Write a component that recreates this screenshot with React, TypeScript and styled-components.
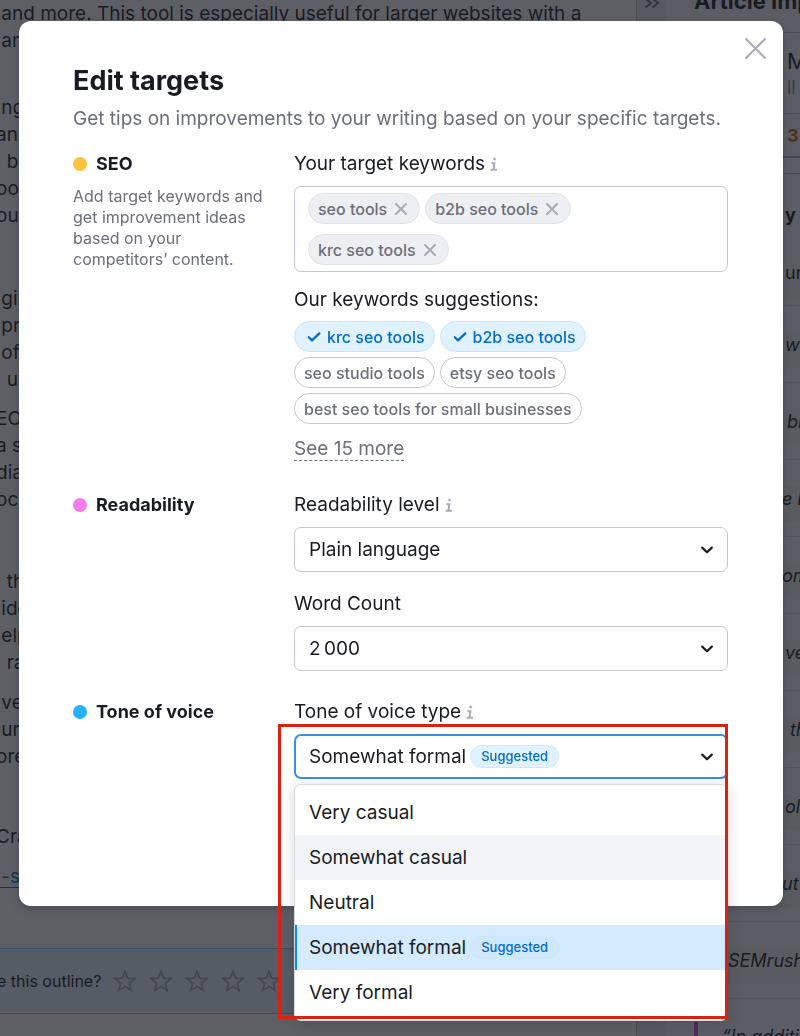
import React, { useState } from "react";
import styled, { createGlobalStyle } from "styled-components";

const GlobalStyle = createGlobalStyle`
  *, *::before, *::after { box-sizing: border-box; }
  html, body { margin: 0; padding: 0; }
  body {
    font-family: Inter, "Liberation Sans", sans-serif;
    color: #191b23;
    overflow: hidden;
  }
  button, select { font-family: inherit; color: inherit; }
`;

/* ---------- page behind the dialog ---------- */

const Page = styled.div`
  display: flex;
  height: 100vh;
  overflow: hidden;
  background: #fff;
`;

const Article = styled.main`
  flex: 1;
  min-width: 0;
  margin-left: -4px;
  overflow: hidden;
`;

const Paragraph = styled.p<{ $gap: number }>`
  margin: 0 0 ${(p) => p.$gap}px;
  font-size: 19px;
  line-height: 27px;
  white-space: pre;
`;

const ArticleLink = styled.a`
  color: #006dca;
  text-decoration: underline;
  text-underline-offset: 4px;
`;

const RatingBar = styled.div`
  display: flex;
  align-items: center;
  gap: 12px;
  height: 66px;
  margin-top: 58px;
  padding-left: 1px;
  border: solid #8ecdf8;
  border-width: 1px 0;
  background: #e3f5ff;
  font-size: 16px;
  white-space: nowrap;
`;

const StarButton = styled.button`
  display: flex;
  padding: 0;
  border: 0;
  background: none;
  color: #a9abb6;
`;

const CollapseStrip = styled.div`
  width: 30px;
  border-left: 1px solid #c4c7cf;
  background: #e8eaee;
  display: flex;
  justify-content: center;
  align-items: flex-start;
  color: #6c6e79;
`;

const Sidebar = styled.aside`
  width: 134px;
  overflow: hidden;
  white-space: nowrap;
  background: #f7f8fa;
`;

const SidebarTitle = styled.h2`
  margin: 0;
  height: 33px;
  padding-left: 28px;
  border-bottom: 1px solid #c4c7cf;
  font-size: 22px;
  line-height: 2px;
`;

const Score = styled.section`
  padding: 14px 0 12px 121px;
  border-bottom: 1px solid #c4c7cf;
  font-size: 22px;
  line-height: 28px;
`;

const ScoreNote = styled.small`
  display: block;
  font-size: 18px;
  line-height: 26px;
  color: #8a8e9b;
`;

const ScoreCount = styled.section`
  height: 44px;
  padding-left: 121px;
  border-bottom: 2px solid #a9abb6;
  font-size: 18px;
  line-height: 44px;
  font-weight: 700;
  color: #c56200;
`;

const IssueHeading = styled.h3`
  margin: 15px 0 0;
  height: 66px;
  padding: 14px 0 0 119px;
  border-top: 1px solid #c4c7cf;
  font-size: 18px;
  line-height: 54px;
`;

const IssueRow = styled.div<{ $inset: number; $accent?: boolean; $plain?: boolean }>`
  display: flex;
  align-items: center;
  height: ${(p) => (p.$plain ? 67 : 77)}px;
  padding-left: ${(p) => p.$inset}px;
  border-bottom: 1px solid #d6dae2;
  background: linear-gradient(#f7f8fa 26px, #eef0f2 26px, #eef0f2 62px, #f7f8fa 62px);
  font-size: 18px;
  font-style: ${(p) => (p.$plain ? "normal" : "italic")};
  white-space: pre;
  ${(p) => p.$accent && "margin-left: 28px; margin-top: 23px; height: 30px; border-left: 4px solid #d84fe0;"}
`;

/* ---------- dialog ---------- */

const Overlay = styled.div`
  position: fixed;
  inset: 0;
  padding: 21px 17px 0 19px;
  background: rgba(25, 27, 35, 0.7);
`;

const Dialog = styled.section`
  position: relative;
  min-height: 885px;
  padding: 42px 55px 0 54px;
  border-radius: 12px;
  background: #fff;
  box-shadow: 0 3px 8px rgba(25, 27, 35, 0.25);
`;

const CloseButton = styled.button`
  position: absolute;
  top: 17px;
  right: 17px;
  display: flex;
  padding: 0;
  border: 0;
  background: none;
  color: #a9abb6;
`;

const Title = styled.h1`
  margin: 0 0 8px;
  font-size: 27px;
  line-height: 36px;
`;

const Subtitle = styled.p`
  margin: 0 0 21px;
  font-size: 19px;
  line-height: 24px;
  color: #6c6e79;
`;

const Group = styled.section`
  display: grid;
  grid-template-columns: 197px minmax(0, 1fr);
  column-gap: 24px;
  align-items: start;
`;

const GroupTitle = styled.h2`
  display: flex;
  align-items: center;
  gap: 9px;
  margin: 0 0 10px;
  font-size: 18px;
  line-height: 24px;
  font-weight: 700;
`;

const Dot = styled.span<{ $color: string }>`
  width: 14px;
  height: 14px;
  border-radius: 50%;
  background: ${(p) => p.$color};
`;

const GroupText = styled.p`
  margin: 0;
  font-size: 16px;
  line-height: 21px;
  color: #6c6e79;
`;

const Field = styled.div<{ $gap?: number }>`
  position: relative;
  margin-bottom: ${(p) => p.$gap ?? 0}px;
`;

const labelText = `
  display: flex;
  align-items: center;
  gap: 5px;
  font-size: 19px;
  line-height: 24px;
`;

const Label = styled.label`
  ${labelText}
  margin-bottom: 10px;
`;

const Caption = styled.h3`
  ${labelText}
  margin: 0 0 9px;
  font-weight: 400;
`;

const TagBox = styled.div`
  display: flex;
  flex-wrap: wrap;
  gap: 10px 5px;
  margin-bottom: 16px;
  padding: 6px 120px 6px 13px;
  border: 1px solid #c4c7cf;
  border-radius: 7px;
`;

const Tag = styled.span`
  display: flex;
  align-items: center;
  gap: 8px;
  height: 31px;
  padding: 0 12px 0 9px;
  border: 1px solid #e0e1e9;
  border-radius: 16px;
  background: #eeeff3;
  font-size: 16px;
  font-weight: 500;
  color: #6c6e79;
`;

const TagRemove = styled.button`
  display: flex;
  padding: 0;
  border: 0;
  background: none;
  color: #a9abb6;
`;

const Suggestions = styled.div`
  display: flex;
  flex-wrap: wrap;
  gap: 5px;
  padding-right: 100px;
  margin-bottom: 14px;
`;

const Suggestion = styled.button<{ $on?: boolean }>`
  display: flex;
  align-items: center;
  gap: 6px;
  height: 31px;
  padding: 0 ${(p) => (p.$on ? "9px 0 12px" : "9px")};
  border: 1px solid ${(p) => (p.$on ? "#c4e5fe" : "#c4c7cf")};
  border-radius: 16px;
  background: ${(p) => (p.$on ? "#e0f1ff" : "#fff")};
  font-size: 16px;
  font-weight: 500;
  color: ${(p) => (p.$on ? "#006dca" : "#6c6e79")};
`;

const MoreButton = styled.button`
  padding: 0;
  border: 0;
  border-bottom: 1px dashed #6c6e79;
  background: none;
  font-size: 19px;
  line-height: 22px;
  color: #6c6e79;
`;

const SelectWrap = styled.div`
  display: grid;
  align-items: center;
  > * { grid-area: 1 / 1; }
  > svg { justify-self: end; margin-right: 14px; pointer-events: none; }
`;

const Select = styled.select`
  appearance: none;
  width: 100%;
  height: 45px;
  padding: 0 40px 0 14px;
  border: 1px solid #c4c7cf;
  border-radius: 7px;
  background: #fff;
  font-size: 19px;
`;

const ToneTrigger = styled.button`
  display: flex;
  align-items: center;
  gap: 4px;
  width: 100%;
  height: 45px;
  padding: 0 12px 0 13px;
  border: 2px solid #3b8ee0;
  border-radius: 7px;
  background: #fff;
  font-size: 19px;
  > svg { margin-left: auto; }
`;

const Badge = styled.span`
  height: 23px;
  padding: 0 10px;
  border: 1px solid #cce8ff;
  border-radius: 12px;
  background: #e0f1ff;
  font-size: 13px;
  line-height: 20px;
  font-weight: 500;
  color: #006dca;
`;

const Menu = styled.ul`
  position: absolute;
  z-index: 1;
  top: 84px;
  left: 0;
  right: 0;
  margin: 0;
  padding: 5px 0;
  border: 1px solid #d9dae2;
  border-radius: 7px;
  background: #fff;
  box-shadow: 0 2px 14px rgba(25, 27, 35, 0.18);
  list-style: none;
`;

const Option = styled.li<{ $state?: "hover" | "selected" }>`
  display: flex;
  align-items: center;
  gap: 4px;
  height: 45px;
  padding-left: ${(p) => (p.$state === "selected" ? 12 : 14)}px;
  border-left: ${(p) => (p.$state === "selected" ? "2px solid #008ff8" : "0")};
  background: ${(p) => (p.$state === "selected" ? "#d4eafe" : p.$state === "hover" ? "#f3f4f8" : "#fff")};
  font-size: 19px;
  ${Badge} {
    ${(p) => p.$state === "selected" && "background: #cfe8fe; border-color: #cbe6fd;"}
  }
`;

const Highlight = styled.div`
  position: absolute;
  z-index: 2;
  top: 24px;
  left: -16px;
  right: 0;
  height: 295px;
  border: 3px solid #db2114;
  pointer-events: none;
`;

/* ---------- icons ---------- */

const InfoIcon = () => (
  <svg width="8" height="14" viewBox="0 0 8 14" fill="none" stroke="#a9abb6" strokeWidth="2" aria-hidden="true">
    <circle cx="4.6" cy="2" r="1.4" fill="#a9abb6" stroke="none" />
    <path d="M1.400 6.200H4.300L3.500 12.600M.6 12.800h6.400" />
  </svg>
);

const CrossIcon = ({ size, weight }: { size: number; weight: number }) => (
  <svg width={size} height={size} viewBox={`0 0 ${size} ${size}`} fill="none" stroke="currentColor" strokeWidth={weight} strokeLinecap="round" aria-hidden="true">
    <path d={`M1 1L${size - 1} ${size - 1}M${size - 1} 1L1 ${size - 1}`} />
  </svg>
);

const CheckIcon = () => (
  <svg width="14" height="12" viewBox="0 0 14 12" fill="none" stroke="currentColor" strokeWidth="2.2" strokeLinecap="round" strokeLinejoin="round" aria-hidden="true">
    <path d="M1.800 6.200L5 9.400 12.400 2.400" />
  </svg>
);

const ChevronIcon = () => (
  <svg width="14" height="10" viewBox="0 0 14 10" fill="none" stroke="#191b23" strokeWidth="2.2" strokeLinecap="round" strokeLinejoin="round" aria-hidden="true">
    <path d="M2.200 2.600L7 7.200l4.800-4.600" />
  </svg>
);

const StarIcon = () => (
  <svg width="24" height="24" viewBox="0 0 24 24" fill="none" stroke="currentColor" strokeWidth="1.8" aria-hidden="true">
    <path d="M12 2.400l2.700 6.700 7.200.5-5.500 4.700 1.700 7.100L12 17.500l-6.100 3.900 1.700-7.100L2.100 9.600l7.200-.5z" />
  </svg>
);

const DoubleChevronIcon = () => (
  <svg width="16" height="12" viewBox="0 0 16 12" fill="none" stroke="currentColor" strokeWidth="2" strokeLinecap="round" aria-hidden="true">
    <path d="M2-1l5 4-5 4M9-1l5 4-5 4" />
  </svg>
);

/* ---------- data ---------- */

const paragraphs = [
  { gap: 40, lines: [" and more. This tool is especially useful for larger websites with a", " and audits"] },
  { gap: 56, lines: [" ng", "and", "  be", "ool", "our"] },
  { gap: 12, lines: [" gin", " pro", " off", "  use"] },
  { gap: 55, lines: ["EO", "a s", "dia", "oca"] },
  { gap: 13, lines: ["  th", " ide", " elp", "  ra"] },
  { gap: 53, lines: [" ve", " ur", "ore"] },
  { gap: 13, lines: ["Cra"] },
];

const issues = [
  { text: "ur", inset: 119, plain: true },
  { text: "we", inset: 119 },
  { text: "bi", inset: 121 },
  { text: "e k", inset: 116 },
  { text: "om", inset: 116 },
  { text: "ve", inset: 119 },
  { text: " th", inset: 119 },
  { text: "ol", inset: 119 },
  { text: "ut", inset: 116 },
  { text: "SEMrush", inset: 62 },
];

const tones: { name: string; state?: "hover" | "selected" }[] = [
  { name: "Very casual" },
  { name: "Somewhat casual", state: "hover" },
  { name: "Neutral" },
  { name: "Somewhat formal", state: "selected" },
  { name: "Very formal" },
];

const suggestions = [
  { text: "krc seo tools", on: true },
  { text: "b2b seo tools", on: true },
  { text: "seo studio tools" },
  { text: "etsy seo tools" },
  { text: "best seo tools for small businesses" },
];

export default function App() {
  const [tags, setTags] = useState(["seo tools", "b2b seo tools", "krc seo tools"]);

  return (
    <>
      <GlobalStyle />
      <Page>
        <Article>
          {paragraphs.map((p) => (
            <Paragraph key={p.lines[0]} $gap={p.gap}>{p.lines.join("\n")}</Paragraph>
          ))}
          <Paragraph $gap={0}><ArticleLink href="#source"> -seo</ArticleLink></Paragraph>
          <RatingBar>
            e this outline?
            {[1, 2, 3, 4, 5].map((n) => (
              <StarButton key={n} aria-label={`Rate ${n}`}><StarIcon /></StarButton>
            ))}
          </RatingBar>
        </Article>
        <CollapseStrip><DoubleChevronIcon /></CollapseStrip>
        <Sidebar>
          <SidebarTitle>Article Improvements</SidebarTitle>
          <Score>M<ScoreNote>ll s</ScoreNote></Score>
          <ScoreCount>3</ScoreCount>
          <IssueHeading>y</IssueHeading>
          {issues.map((i) => (
            <IssueRow key={i.text} $inset={i.inset} $plain={i.plain}>{i.text}</IssueRow>
          ))}
          <IssueRow $inset={24} $accent>“In addition</IssueRow>
        </Sidebar>
      </Page>

      <Overlay>
        <Dialog role="dialog" aria-modal="true" aria-labelledby="dialog-title">
          <CloseButton aria-label="Close"><CrossIcon size={21} weight={2} /></CloseButton>
          <Title id="dialog-title">Edit targets</Title>
          <Subtitle>Get tips on improvements to your writing based on your specific targets.</Subtitle>

          <Group>
            <div>
              <GroupTitle><Dot $color="#fdc23c" />SEO</GroupTitle>
              <GroupText>Add target keywords and get improvement ideas based on your competitors’ content.</GroupText>
            </div>
            <Field $gap={32}>
              <Label as="div">Your target keywords <InfoIcon /></Label>
              <TagBox>
                {tags.map((t) => (
                  <Tag key={t}>
                    {t}
                    <TagRemove aria-label={`Remove ${t}`} onClick={() => setTags(tags.filter((x) => x !== t))}>
                      <CrossIcon size={12} weight={2} />
                    </TagRemove>
                  </Tag>
                ))}
              </TagBox>
              <Caption>Our keywords suggestions:</Caption>
              <Suggestions>
                {suggestions.map((s) => (
                  <Suggestion key={s.text} $on={s.on} aria-pressed={!!s.on}>
                    {s.on && <CheckIcon />}
                    {s.text}
                  </Suggestion>
                ))}
              </Suggestions>
              <MoreButton>See 15 more</MoreButton>
            </Field>
          </Group>

          <Group>
            <GroupTitle><Dot $color="#f67cf0" />Readability</GroupTitle>
            <div>
              <Field $gap={20}>
                <Label htmlFor="level">Readability level <InfoIcon /></Label>
                <SelectWrap>
                  <Select id="level"><option>Plain language</option></Select>
                  <ChevronIcon />
                </SelectWrap>
              </Field>
              <Field $gap={29}>
                <Label htmlFor="words">Word Count</Label>
                <SelectWrap>
                  <Select id="words"><option>{"2\u2009000"}</option></Select>
                  <ChevronIcon />
                </SelectWrap>
              </Field>
            </div>
          </Group>

          <Group>
            <GroupTitle><Dot $color="#26b0fc" />Tone of voice</GroupTitle>
            <Field>
              <Label htmlFor="tone">Tone of voice type <InfoIcon /></Label>
              <ToneTrigger id="tone" aria-haspopup="listbox" aria-expanded="true">
                Somewhat formal <Badge>Suggested</Badge>
                <ChevronIcon />
              </ToneTrigger>
              <Menu role="listbox" aria-label="Tone of voice type">
                {tones.map((t) => (
                  <Option key={t.name} role="option" aria-selected={t.state === "selected"} $state={t.state}>
                    {t.name}
                    {t.state === "selected" && <Badge>Suggested</Badge>}
                  </Option>
                ))}
              </Menu>
              <Highlight />
            </Field>
          </Group>
        </Dialog>
      </Overlay>
    </>
  );
}
